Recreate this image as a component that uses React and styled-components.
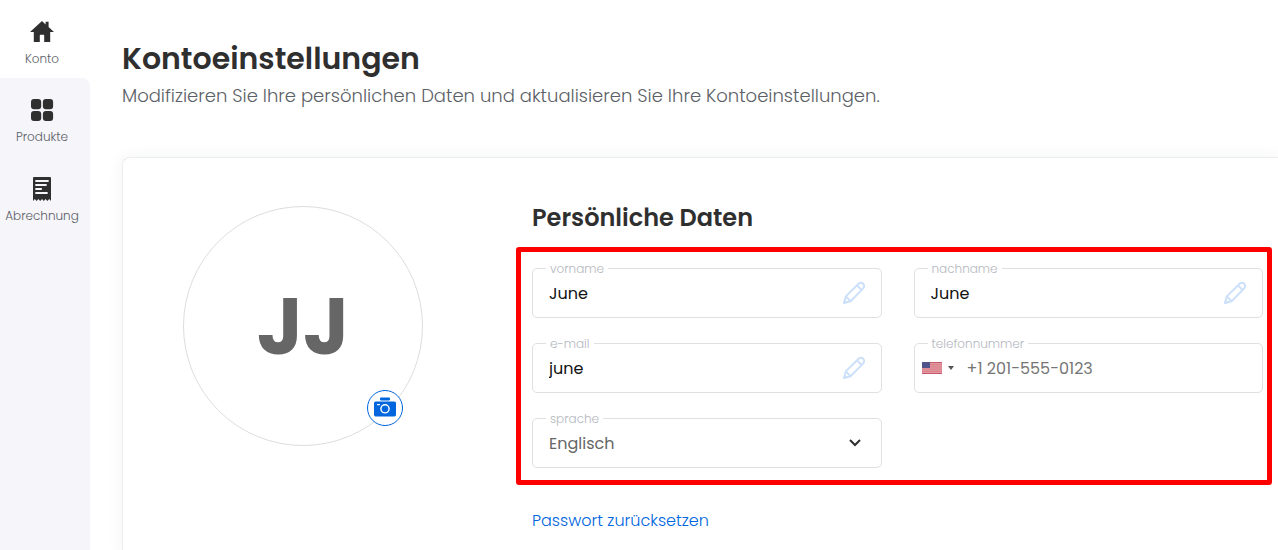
import React from 'react'
import styled, { createGlobalStyle } from 'styled-components';

const GlobalStyle = createGlobalStyle`
  :root {
    --dark-color: #2f2f2f;
    --text-color: #5c5f66;
    --grey-color: #666666;
    --label-color: #b4b7c0;
    --border-color: #e0e0e3;
    --blue-color: #0066dd;
    --light-blue-color: #cce0fa;
    --sidebar-color: #f5f5fa;
  }
  * {
    box-sizing: border-box;
    margin: 0;
    padding: 0;
  }
  body {
    background: #ffffff;
    font-family: Poppins, Inter, sans-serif;
    font-weight: 300;
    color: var(--dark-color);
  }
  button, input, select {
    font: inherit;
    color: inherit;
    background: none;
    border: none;
    outline: none;
  }
  button {
    cursor: pointer;
  }
  a {
    text-decoration: none;
  }
  svg {
    display: block;
  }
`;

const HomeIcon = () => (
    <svg width="24" height="24" viewBox="0 0 24 24" fill="currentColor">
        <path d="M12 1 L15.6 4.4 V1.8 H18.6 V7 L24 12 H20.2 V22 H14.2 V15.4 Q14.2 14.8 13.6 14.8 H10.4 Q9.8 14.8 9.8 15.4 V22 H3.8 V12 H0 Z" />
    </svg>
)

const ProductsIcon = () => (
    <svg width="24" height="24" viewBox="0 0 24 24" fill="currentColor">
        <rect x="1" y="1" width="10.2" height="10.2" rx="3" />
        <rect x="12.9" y="1" width="10.2" height="10.2" rx="3" />
        <rect x="1" y="12.9" width="10.2" height="10.2" rx="3" />
        <rect x="12.9" y="12.9" width="10.2" height="10.2" rx="3" />
    </svg>
)

const BillIcon = () => (
    <svg width="24" height="24" viewBox="0 0 24 24">
        <path fill="currentColor" d="M4 0 H20 Q21 0 21 1 V24 L19.2 22 L17.4 24 L15.6 22 L13.8 24 L12 22 L10.2 24 L8.4 22 L6.6 24 L4.8 22 L3 24 V1 Q3 0 4 0 Z" />
        <path stroke="#f5f5fa" strokeWidth="1.8" strokeLinecap="round" d="M6 4 H18 M6 8 H16 M6 12 H11.2 M6 16 H17" />
    </svg>
)

const PencilIcon = () => (
    <svg width="24" height="24" viewBox="0 0 24 24" fill="none" stroke="currentColor" strokeWidth="2" strokeLinejoin="round">
        <path d="M2 22 L3.8 15.4 L16.6 2.8 A3.2 3.2 0 0 1 21.2 7.4 L8.6 20.2 Z" />
        <path d="M15 4.4 L19.6 9 M3.8 15.4 L8.6 20.2" />
        <path fill="currentColor" stroke="none" d="M1 23 L2.4 18.6 L5.4 21.6 Z" />
    </svg>
)

const CameraIcon = () => (
    <svg width="24" height="24" viewBox="0 0 24 24">
        <rect x="7" y="1.6" width="10" height="2.8" rx="0.8" fill="currentColor" />
        <rect x="1" y="5.4" width="22" height="15" rx="1.6" fill="currentColor" />
        <circle cx="12" cy="12.8" r="4.1" fill="none" stroke="#ffffff" strokeWidth="1.4" />
        <path d="M4 8.6 H7" stroke="#ffffff" strokeWidth="1.2" />
    </svg>
)

const ChevronIcon = () => (
    <svg width="12" height="8" viewBox="0 0 12 8" fill="none" stroke="currentColor" strokeWidth="2">
        <path d="M1 1 L6 6 L11 1" />
    </svg>
)

const FlagIcon = () => (
    <svg width="20" height="12" viewBox="0 0 20 12">
        <rect width="20" height="12" fill="#d87c87" />
        <path stroke="#e9aeb5" strokeWidth="0.6" d="M0 1.5 H20 M0 3.3 H20 M0 5.1 H20 M0 6.9 H20 M0 8.7 H20 M0 10.5 H20" />
        <path stroke="#c9566a" strokeWidth="1" d="M0 0.5 H20 M0 11.5 H20" />
        <rect width="8" height="6" fill="#51548a" />
    </svg>
)

const Sidebar = () => {
    return (
        <SidebarStyled>
            <NavItem href="#konto" $active>
                <HomeIcon />
                <span>Konto</span>
            </NavItem>
            <div className="rest">
                <NavItem href="#produkte">
                    <ProductsIcon />
                    <span>Produkte</span>
                </NavItem>
                <NavItem href="#abrechnung">
                    <BillIcon />
                    <span>Abrechnung</span>
                </NavItem>
            </div>
        </SidebarStyled>
    )
}

const EditField = ({ id, label, value, type = 'text' }) => {
    return (
        <Field>
            <label htmlFor={id}>{label}</label>
            <input id={id} type={type} defaultValue={value} />
            <EditButton type="button" aria-label={label + ' bearbeiten'}>
                <PencilIcon />
            </EditButton>
        </Field>
    )
}

const App = () => {
    return (
        <PageStyled>
            <GlobalStyle />
            <Sidebar />
            <MainStyled>
                <h1>Kontoeinstellungen</h1>
                <p className="subtitle">
                    Modifizieren Sie Ihre persönlichen Daten und aktualisieren Sie Ihre Kontoeinstellungen.
                </p>
                <CardStyled>
                    <Avatar>
                        <span>JJ</span>
                        <CameraButton type="button" aria-label="Foto ändern">
                            <CameraIcon />
                        </CameraButton>
                    </Avatar>
                    <FormStyled>
                        <h2>Persönliche Daten</h2>
                        <Highlight>
                            <EditField id="vorname" label="vorname" value="June" />
                            <EditField id="nachname" label="nachname" value="June" />
                            <EditField id="email" label="e-mail" value="june" />
                            <Field $phone>
                                <label htmlFor="telefon">telefonnummer</label>
                                <CountryButton type="button" aria-label="Land wählen">
                                    <FlagIcon />
                                    <span className="arrow" />
                                </CountryButton>
                                <input id="telefon" type="tel" placeholder="+1 201-555-0123" />
                            </Field>
                            <Field $select>
                                <label htmlFor="sprache">sprache</label>
                                <select id="sprache" defaultValue="en">
                                    <option value="en">Englisch</option>
                                    <option value="de">Deutsch</option>
                                </select>
                                <ChevronIcon />
                            </Field>
                        </Highlight>
                        <ResetLink href="#passwort">Passwort zurücksetzen</ResetLink>
                    </FormStyled>
                </CardStyled>
            </MainStyled>
        </PageStyled>
    )
}

const PageStyled = styled.div`
  display: flex;
  min-height: 100vh;
`;

const SidebarStyled = styled.nav`
  flex: 0 0 90px;
  display: flex;
  flex-direction: column;
  .rest {
    flex: 1;
    display: flex;
    flex-direction: column;
    gap: 1px;
    background: var(--sidebar-color);
    border-top-right-radius: 8px;
  }
`;

const NavItem = styled.a`
  display: flex;
  flex-direction: column;
  align-items: center;
  gap: 6px;
  height: 78px;
  padding: 20px 6px 0 0;
  background: ${props => props.$active ? '#ffffff' : 'transparent'};
  color: var(--dark-color);
  span {
    font-size: 12px;
    line-height: 18px;
    color: var(--text-color);
  }
`;

const MainStyled = styled.main`
  flex: 1;
  min-width: 0;
  padding: 36px 0 32px 32px;
  h1 {
    font-size: 30px;
    line-height: 46px;
    font-weight: 600;
  }
  .subtitle {
    font-size: 18px;
    line-height: 28px;
    color: var(--text-color);
  }
`;

const CardStyled = styled.section`
  display: flex;
  align-items: flex-start;
  gap: 93px;
  margin-top: 47px;
  padding: 48px 6px 24px 60px;
  border: 1px solid #ededf0;
  border-right: none;
  border-radius: 8px 0 0 8px;
  box-shadow: 0 0 16px rgba(40, 50, 60, 0.06);
`;

const Avatar = styled.div`
  position: relative;
  flex: 0 0 240px;
  height: 240px;
  display: flex;
  align-items: center;
  justify-content: center;
  border: 1px solid #dddddd;
  border-radius: 50%;
  span {
    font-size: 80px;
    line-height: 120px;
    font-weight: 700;
    color: var(--grey-color);
  }
`;

const CameraButton = styled.button`
  position: absolute;
  right: 19px;
  bottom: 19px;
  display: flex;
  align-items: center;
  justify-content: center;
  width: 36px;
  height: 36px;
  border: 1px solid var(--blue-color);
  border-radius: 50%;
  background: #ffffff;
  color: var(--blue-color);
`;

const FormStyled = styled.form`
  flex: 1;
  min-width: 0;
  h2 {
    padding: 0 16px;
    margin-bottom: 17px;
    font-size: 24px;
    line-height: 24px;
    font-weight: 600;
  }
`;

const Highlight = styled.div`
  display: grid;
  grid-template-columns: repeat(2, minmax(0, 1fr));
  gap: 25px 32px;
  padding: 16px 4px 12px 11px;
  border: 5px solid #ff0000;
  border-radius: 3px;
`;

const Field = styled.div`
  position: relative;
  display: flex;
  align-items: center;
  height: 50px;
  padding: ${props => props.$phone ? '0 16px 0 7px' : '0 15px 0 16px'};
  border: 1px solid var(--border-color);
  border-radius: 5px;
  label {
    position: absolute;
    top: -9px;
    left: 13px;
    padding: 0 4px;
    background: #ffffff;
    font-size: 12px;
    line-height: 18px;
    color: var(--label-color);
  }
  input, select {
    flex: 1;
    min-width: 0;
    height: 48px;
    font-size: 16px;
    font-weight: 400;
    color: ${props => props.$select ? 'var(--grey-color)' : '#111111'};
  }
  input::placeholder {
    color: #757575;
  }
  select {
    appearance: none;
    margin-right: -16px;
  }
  select + svg {
    margin-right: 5px;
    pointer-events: none;
  }
`;

const EditButton = styled.button`
  width: 24px;
  height: 24px;
  color: var(--light-blue-color);
`;

const CountryButton = styled.button`
  display: flex;
  align-items: center;
  gap: 6px;
  margin-right: 13px;
  .arrow {
    border-left: 3px solid transparent;
    border-right: 3px solid transparent;
    border-top: 4px solid #555555;
  }
`;

const ResetLink = styled.a`
  display: inline-block;
  margin: 24px 16px 0;
  font-size: 16px;
  line-height: 24px;
  color: var(--blue-color);
`;

export default App
